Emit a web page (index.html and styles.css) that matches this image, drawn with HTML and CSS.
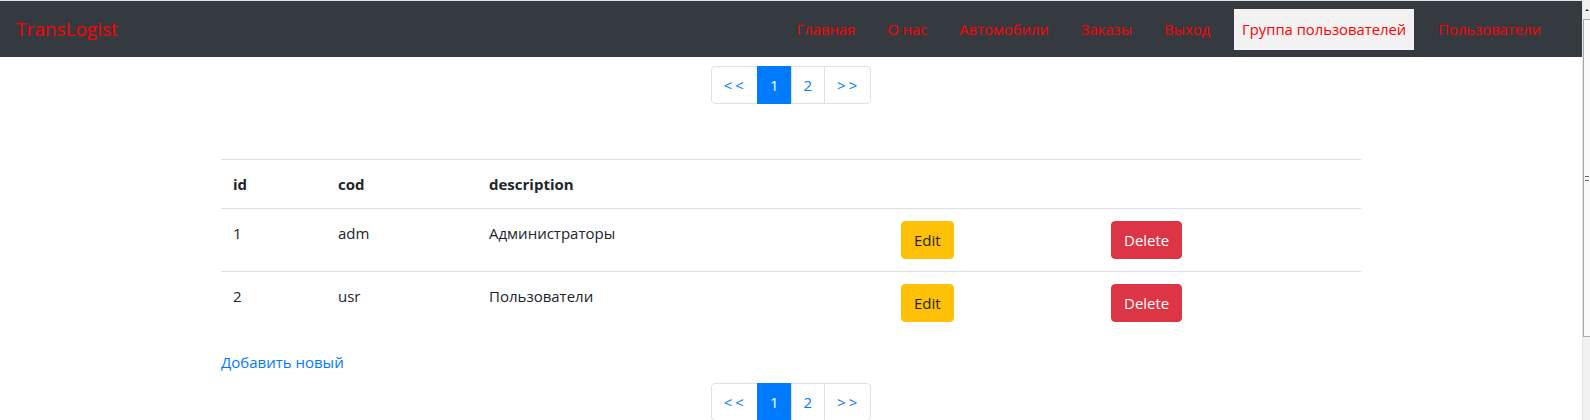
FILE: index.html
```html
<!DOCTYPE html>
<html lang="ru">
<head>
<meta charset="utf-8">
<title>TransLogist</title>
<link rel="stylesheet" href="styles.css">
</head>
<body>
<div class="window">
  <div class="page">
    <nav class="navbar">
      <a class="brand" href="#">TransLogist</a>
      <ul class="nav">
        <li><a class="nav-link" href="#">Главная</a></li>
        <li><a class="nav-link" href="#">О нас</a></li>
        <li><a class="nav-link" href="#">Автомобили</a></li>
        <li><a class="nav-link" href="#">Заказы</a></li>
        <li><a class="nav-link" href="#">Выход</a></li>
        <li><a class="nav-link active" href="#">Группа пользователей</a></li>
        <li><a class="nav-link" href="#">Пользователи</a></li>
      </ul>
    </nav>
    <main class="container">
      <ul class="pagination pagination-top">
        <li><a class="page-link first" href="#">&lt;&lt;</a></li>
        <li><a class="page-link active" href="#">1</a></li>
        <li><a class="page-link" href="#">2</a></li>
        <li><a class="page-link last" href="#">&gt;&gt;</a></li>
      </ul>
      <table class="table">
        <colgroup>
          <col class="c-id"><col class="c-cod"><col class="c-desc"><col class="c-edit"><col class="c-del">
        </colgroup>
        <thead>
          <tr><th>id</th><th>cod</th><th>description</th><th></th><th></th></tr>
        </thead>
        <tbody>
          <tr>
            <td>1</td><td>adm</td><td>Администраторы</td>
            <td><a class="btn btn-warning" href="#">Edit</a></td>
            <td><a class="btn btn-danger" href="#">Delete</a></td>
          </tr>
          <tr>
            <td>2</td><td>usr</td><td>Пользователи</td>
            <td><a class="btn btn-warning" href="#">Edit</a></td>
            <td><a class="btn btn-danger" href="#">Delete</a></td>
          </tr>
        </tbody>
      </table>
      <a class="add-link" href="#">Добавить новый</a>
      <ul class="pagination">
        <li><a class="page-link first" href="#">&lt;&lt;</a></li>
        <li><a class="page-link active" href="#">1</a></li>
        <li><a class="page-link" href="#">2</a></li>
        <li><a class="page-link last" href="#">&gt;&gt;</a></li>
      </ul>
    </main>
  </div>
  <div class="scrollbar">
    <div class="sb-arrow"></div>
    <div class="sb-thumb"><span class="sb-grip"></span></div>
  </div>
</div>
</body>
</html>
```

FILE: styles.css
```css
* { box-sizing: border-box; }
html, body {
  margin: 0;
  padding: 0;
  height: 420px;
  overflow: hidden;
  background: #fff;
}
body {
  font-family: "Open Sans", "Noto Sans", "Liberation Sans", sans-serif;
  font-size: 15px;
  line-height: 24px;
  color: #212529;
}
a { text-decoration: none; }

.window {
  display: flex;
  height: 420px;
}
.page {
  flex: 1;
  border-top: 1px solid #e3e3e3;
  min-width: 0;
}

.navbar {
  height: 56px;
  background: #343a40;
  display: flex;
  align-items: center;
  justify-content: space-between;
  padding: 0 33px 0 16px;
}
.brand {
  color: #ff0000;
  font-size: 19px;
  line-height: 30px;
}
.nav {
  list-style: none;
  margin: 0;
  padding: 0;
  display: flex;
  gap: 16px;
}
.nav-link {
  display: block;
  color: #ff0000;
  padding: 8px 8px;
  line-height: 25px;
  font-size: 14.8px;
}
.nav-link.active {
  background: #f2f2f2;
}

.container {
  width: 1140px;
  margin: 0 auto;
}

.pagination {
  list-style: none;
  margin: 9px 0 0;
  padding: 0;
  display: flex;
  justify-content: center;
}
.pagination-top { margin-bottom: 55px; }
.page-link {
  display: block;
  padding: 8px 12px;
  line-height: 20px;
  color: #007bff;
  border: 1px solid #dee2e6;
  margin-left: -1px;
  background: #fff;
}
.page-link.first,
.page-link.last {
  letter-spacing: 3px;
  padding-right: 10px;
}
.page-link.first {
  margin-left: 0;
  border-radius: 4px 0 0 4px;
}
.page-link.last { border-radius: 0 4px 4px 0; }
.page-link.active {
  background: #007bff;
  border-color: #007bff;
  color: #fff;
}

.table {
  width: 1140px;
  border-collapse: collapse;
  table-layout: fixed;
  margin-bottom: 16px;
}
.c-id { width: 105px; }
.c-cod { width: 151px; }
.c-desc { width: 412px; }
.c-edit { width: 210px; }
.c-del { width: 262px; }
.table th, .table td {
  padding: 12px;
  text-align: left;
  vertical-align: top;
  border-top: 1px solid #dee2e6;
}
.table th { font-weight: 700; }

.btn {
  display: inline-block;
  padding: 6px 12px;
  line-height: 24px;
  border-radius: 4px;
  border: 1px solid transparent;
}
.btn-warning {
  background: #ffc107;
  border-color: #ffc107;
  color: #212529;
}
.btn-danger {
  background: #dc3545;
  border-color: #dc3545;
  color: #fff;
}

.add-link {
  display: block;
  color: #007bff;
}

.scrollbar {
  width: 8px;
  background: #f0f0f0;
  position: relative;
  border-left: 1px solid #e6e6e6;
}
.sb-arrow {
  margin: 9px auto 0;
  width: 0;
  height: 0;
  border-left: 2px solid transparent;
  border-right: 2px solid transparent;
  border-bottom: 2px solid #333;
}
.sb-thumb {
  margin-top: 8px;
  height: 318px;
  background: #fafafa;
  border: 1px solid #a8a8a8;
  border-right: none;
  display: flex;
  align-items: center;
  justify-content: center;
}
.sb-grip {
  width: 4px;
  height: 5px;
  border-top: 1px solid #666;
  border-bottom: 1px solid #666;
  position: relative;
}
```
